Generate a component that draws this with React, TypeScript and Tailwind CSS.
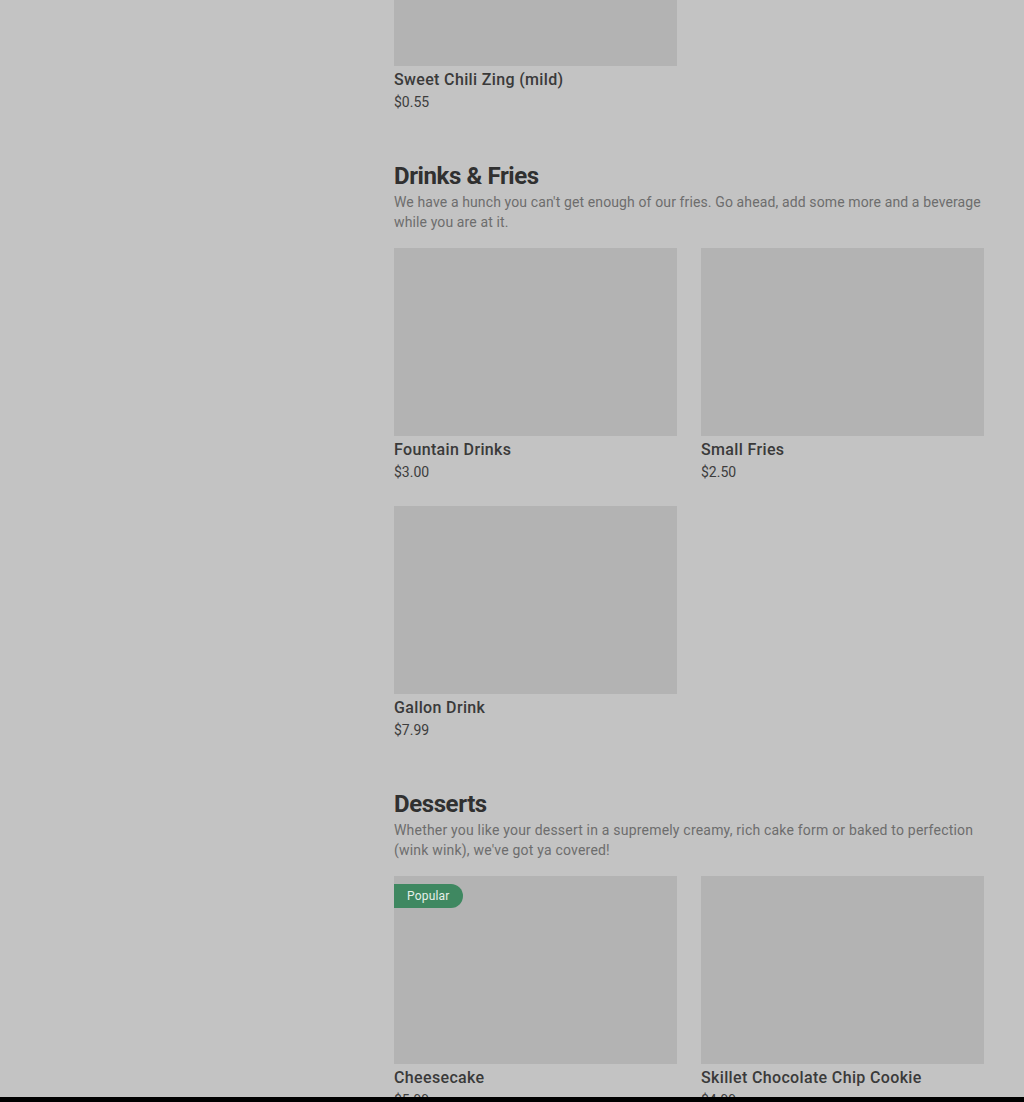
import React from "react";

type Item = { name: string; price: string; popular?: boolean };

function Card({ item, imgClass = "h-[188px]" }: { item: Item; imgClass?: string }) {
  return (
    <div className="flex flex-col">
      <div className={`relative w-full bg-[#b3b3b3] ${imgClass}`}>
        {item.popular && (
          <span className="absolute left-0 top-2 flex h-6 items-center rounded-r-full bg-[#3f8861] px-[13px] text-[12px] leading-none tracking-[0.2px] text-[#e6efe9]">
            Popular
          </span>
        )}
      </div>
      <div className="mt-[2px] text-[16px] font-medium leading-6 tracking-[0.35px] text-[#3a3a3a]">{item.name}</div>
      <div className="text-[14px] leading-5 text-[#3d3d3d]">{item.price}</div>
    </div>
  );
}

function Section({
  title,
  desc,
  items,
  descClass,
}: {
  title: string;
  desc: string;
  items: Item[];
  descClass: string;
}) {
  return (
    <section className="mt-12 flex flex-col">
      <h2 className="text-[24px] font-bold leading-8 tracking-[-0.4px] text-[#303030]">{title}</h2>
      <p className={`text-[14px] leading-5 text-[#6d6d6d] ${descClass}`}>{desc}</p>
      <div className="mt-4 grid grid-cols-2 gap-x-6 gap-y-6">
        {items.map((it) => (
          <Card key={it.name} item={it} />
        ))}
      </div>
    </section>
  );
}

export default function App() {
  return (
    <div
      className="min-h-[1102px] w-full bg-[#c3c3c3]"
      style={{ fontFamily: "Roboto, 'Noto Sans', sans-serif" }}
    >
      <div className="flex">
        <div className="w-[394px] shrink-0" />
        <main className="flex w-[590px] flex-col pb-10">
          <div className="grid grid-cols-2 gap-x-6">
            <Card item={{ name: "Sweet Chili Zing (mild)", price: "$0.55" }} imgClass="h-[66px]" />
          </div>
          <Section
            title="Drinks & Fries"
            descClass="tracking-[0.12px]"
            desc="We have a hunch you can't get enough of our fries. Go ahead, add some more and a beverage while you are at it."
            items={[
              { name: "Fountain Drinks", price: "$3.00" },
              { name: "Small Fries", price: "$2.50" },
              { name: "Gallon Drink", price: "$7.99" },
            ]}
          />
          <Section
            title="Desserts"
            descClass="tracking-[0.2px]"
            desc="Whether you like your dessert in a supremely creamy, rich cake form or baked to perfection (wink wink), we've got ya covered!"
            items={[
              { name: "Cheesecake", price: "$5.99", popular: true },
              { name: "Skillet Chocolate Chip Cookie", price: "$4.99" },
            ]}
          />
        </main>
      </div>
      <div className="fixed bottom-0 left-0 right-0 h-[5px] bg-black" />
    </div>
  );
}
